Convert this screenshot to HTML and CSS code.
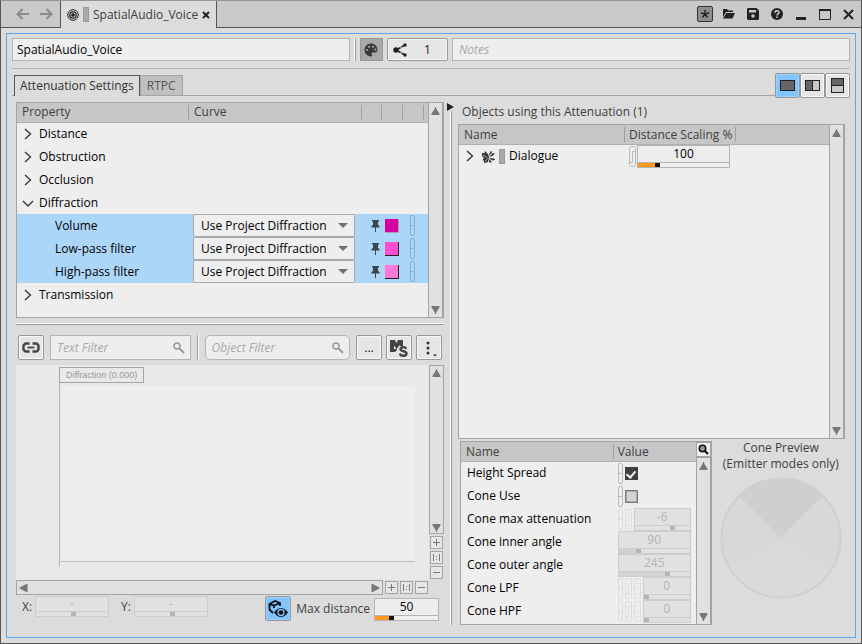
FILE: index.html
```html
<!DOCTYPE html>
<html lang="en">
<head>
<meta charset="utf-8">
<title>SpatialAudio_Voice</title>
<link rel="stylesheet" href="styles.css">
</head>
<body>
<svg class="defs" aria-hidden="true">
  <symbol id="up" viewBox="0 0 7 7"><path d="M3 0h1v1l3 5v1H0V6l3-5z"/></symbol>
  <symbol id="down" viewBox="0 0 7 7"><path d="M0 0h7v1L4 6v1H3V6L0 1z"/></symbol>
  <symbol id="left" viewBox="0 0 7 7"><path d="M7 0v7H6L0 4V3l6-3z"/></symbol>
  <symbol id="right" viewBox="0 0 7 7"><path d="M0 0v7h1l6-3V3L1 0z"/></symbol>
  <symbol id="closed" viewBox="0 0 12 12"><path d="M3 1l5.500 5L3 11" fill="none" stroke="#333" stroke-width="1.300"/></symbol>
  <symbol id="open" viewBox="0 0 12 12"><path d="M1 4l5 5 5-5" fill="none" stroke="#333" stroke-width="1.300"/></symbol>
  <symbol id="pin" viewBox="0 0 9 12"><path d="M1 0h7v1.500H7V5l1.500 1v1.500H5V12H4V7.500H.5V6L2 5V1.500H1z"/></symbol>
  <symbol id="lens" viewBox="0 0 12 12"><circle cx="4" cy="4" r="3" fill="none" stroke="currentColor" stroke-width="1.500"/><path d="M6 6l5 5" stroke="currentColor" stroke-width="1.800"/></symbol>
  <symbol id="curve" viewBox="0 0 7 23"><rect x=".5" y="1.500" width="6" height="20" rx="2" fill="none" stroke="currentColor"/><path d="M1 17.500h2.500v-11H6" fill="none" stroke="currentColor"/></symbol>
  <symbol id="dash" viewBox="0 0 5 23"><rect x=".5" y="1.500" width="4" height="20" rx="1.500" fill="none" stroke="currentColor"/><path d="M1 11.500h3" stroke="currentColor"/></symbol>
  <symbol id="dots" viewBox="0 0 7 23"><rect x=".5" y="1.500" width="6" height="20" rx="2" fill="none" stroke="currentColor"/><path d="M2 6.500h3M2 11.500h3M2 16.500h3" stroke="currentColor"/></symbol>
</svg>

<header class="titlebar">
  <nav class="history">
    <button class="plain" aria-label="Back"><svg width="13" height="12" viewBox="0 0 13 12"><path d="M13 6H1.500M6.500 1l-5 5 5 5" fill="none" stroke="#8b8b8b" stroke-width="2"/></svg></button>
    <button class="plain" aria-label="Forward"><svg width="13" height="12" viewBox="0 0 13 12"><path d="M0 6h11.500M6.500 1l5 5-5 5" fill="none" stroke="#8b8b8b" stroke-width="2"/></svg></button>
  </nav>
  <div class="doctab">
    <svg width="12" height="12" viewBox="0 0 12 12" fill="none" stroke="#222"><circle cx="6" cy="6" r="5.300"/><circle cx="6" cy="6" r="3.200" stroke-width="1.300"/><circle cx="6" cy="6" r="1.300" fill="#222"/></svg>
    <span class="chip"></span>
    <span>SpatialAudio_Voice</span>
    <button class="plain" aria-label="Close tab"><svg width="8" height="8" viewBox="0 0 8 8"><path d="M1 1l6 6M7 1L1 7" stroke="#222" stroke-width="2"/></svg></button>
  </div>
  <div class="winbtns">
    <button class="plain star" aria-label="Pin"><svg width="8" height="8" viewBox="0 0 8 8"><path d="M4 0v4M0 3l4 1 4-1M1.500 7.500L4 4l2.500 3.500" fill="none" stroke="#222" stroke-width="1.400"/></svg></button>
    <button class="plain" aria-label="Open"><svg width="12" height="10" viewBox="0 0 12 10" fill="#222"><path d="M0 0h4l1 1.500h5V3H3L0 8z"/><path d="M3.500 4H12L9.500 9.500H0z"/></svg></button>
    <button class="plain" aria-label="Save"><svg width="12" height="12" viewBox="0 0 12 12"><path d="M1 0h8.500L12 2.500V11l-1 1H1l-1-1V1z" fill="#222"/><path d="M2 2h7v2.500H2z" fill="#ccc"/><circle cx="6" cy="8" r="1.800" fill="#ccc"/></svg></button>
    <button class="plain" aria-label="Help"><svg width="12" height="12" viewBox="0 0 12 12"><circle cx="6" cy="6" r="6" fill="#222"/><path d="M4 4.700C4 2 8 2.200 8 4.500 8 6 6 5.900 6 7.500M6 8.500v1.500" fill="none" stroke="#ccc" stroke-width="1.500"/></svg></button>
    <button class="plain" aria-label="Minimize"><svg width="12" height="12" viewBox="0 0 12 12"><path d="M1 9h10v3H1z" fill="#222"/></svg></button>
    <button class="plain" aria-label="Maximize"><svg width="12" height="11" viewBox="0 0 12 11"><path d="M.5 1h11v9.500H.5z" fill="none" stroke="#222"/><path d="M0 0h12v2H0z" fill="#222"/></svg></button>
    <button class="plain" aria-label="Close"><svg width="11" height="11" viewBox="0 0 11 11"><path d="M1 1l9 9M10 1l-9 9" stroke="#222" stroke-width="2"/></svg></button>
  </div>
</header>

<main class="editor">
  <div class="identity">
    <input class="field name" type="text" aria-label="Name" value="SpatialAudio_Voice">
    <span class="vsep"></span>
    <button class="palette" aria-label="Color"><svg width="14" height="14" viewBox="0 0 14 14"><path d="M7 .5C3 .5.500 3.500.5 7S3.500 13.500 7 13.500c1.500 0 1-1.500.7-2.300-.2-1 .3-1.700 1.300-1.700h2C12.500 9.500 13.500 8.500 13.500 7 13.500 3 10.500.500 7 .5z" fill="#3a3a3a"/><g fill="#a9a9a9"><circle cx="3" cy="7" r="1.100"/><circle cx="5" cy="3.800" r="1.100"/><circle cx="9" cy="3.800" r="1.100"/><circle cx="11.300" cy="6.500" r="1.100"/></g></svg></button>
    <button class="btn share" aria-label="References"><svg width="14" height="14" viewBox="0 0 14 14"><g fill="#222"><circle cx="3" cy="7" r="2.700"/><circle cx="12" cy="2" r="1.700"/><circle cx="12" cy="12" r="1.700"/></g><path d="M5 6l6-3.500M5 8l6 3.500" stroke="#222" stroke-width="1.500" stroke-dasharray="3 1"/></svg><span>1</span></button>
    <input class="field notes" type="text" aria-label="Notes" placeholder="Notes">
  </div>
  <hr class="rule">
  <div class="tabbar">
    <div class="tabs" role="tablist">
      <button class="tab active" role="tab">Attenuation Settings</button>
      <button class="tab" role="tab">RTPC</button>
    </div>
    <div class="views">
      <button class="btn on" aria-label="Single view"><svg width="15" height="11"><rect x=".5" y=".5" width="14" height="10" fill="#666" stroke="#222"/></svg></button>
      <button class="btn" aria-label="Side by side"><svg width="15" height="11"><rect x=".5" y=".5" width="14" height="10" fill="#c9c9c9" stroke="#222"/><rect x=".5" y=".5" width="7" height="10" fill="#666" stroke="#222"/></svg></button>
      <button class="btn" aria-label="Stacked"><svg width="13" height="15"><rect x=".5" y=".5" width="12" height="14" fill="#c9c9c9" stroke="#222"/><rect x=".5" y=".5" width="12" height="7" fill="#666" stroke="#222"/></svg></button>
    </div>
  </div>

  <div class="workspace">
    <section class="left">
      <div class="box properties">
        <div class="body">
          <table>
            <colgroup><col class="c-prop"><col><col class="c-pin"><col class="c-s"><col class="c-s"><col class="c-end"></colgroup>
            <thead><tr><th>Property</th><th>Curve</th><th></th><th></th><th></th><th class="last"></th></tr></thead>
            <tbody>
              <tr><td colspan="6"><span class="node"><svg class="tw"><use href="#closed"/></svg>Distance</span></td></tr>
              <tr><td colspan="6"><span class="node"><svg class="tw"><use href="#closed"/></svg>Obstruction</span></td></tr>
              <tr><td colspan="6"><span class="node"><svg class="tw"><use href="#closed"/></svg>Occlusion</span></td></tr>
              <tr><td colspan="6"><span class="node"><svg class="tw"><use href="#open"/></svg>Diffraction</span></td></tr>
              <tr class="sel"><td class="child"><label for="s1">Volume</label></td><td class="pick"><span class="combo"><select id="s1"><option>Use Project Diffraction</option></select></span></td><td class="pincell"><svg class="pin"><use href="#pin"/></svg></td><td class="mid"><button class="swatch s1" aria-label="Volume color"></button></td><td class="mid"><svg class="dash"><use href="#dash"/></svg></td><td></td></tr>
              <tr class="sel"><td class="child"><label for="s2">Low-pass filter</label></td><td class="pick"><span class="combo"><select id="s2"><option>Use Project Diffraction</option></select></span></td><td class="pincell"><svg class="pin"><use href="#pin"/></svg></td><td class="mid"><button class="swatch s2" aria-label="Low-pass color"></button></td><td class="mid"><svg class="dash"><use href="#dash"/></svg></td><td></td></tr>
              <tr class="sel"><td class="child"><label for="s3">High-pass filter</label></td><td class="pick"><span class="combo"><select id="s3"><option>Use Project Diffraction</option></select></span></td><td class="pincell"><svg class="pin"><use href="#pin"/></svg></td><td class="mid"><button class="swatch s3" aria-label="High-pass color"></button></td><td class="mid"><svg class="dash"><use href="#dash"/></svg></td><td></td></tr>
              <tr><td colspan="6"><span class="node"><svg class="tw"><use href="#closed"/></svg>Transmission</span></td></tr>
            </tbody>
          </table>
        </div>
        <div class="vbar"><svg><use href="#up"/></svg><svg><use href="#down"/></svg></div>
      </div>
      <div class="hsplit"></div>
      <div class="filters">
        <button class="btn sq" aria-label="Link selection"><svg width="18" height="11" viewBox="0 0 18 11" fill="none" stroke="#444" stroke-width="2.400"><path d="M7.500 1.500H5A3 3 0 0 0 1.500 5v1A3 3 0 0 0 5 9.500h2.500M10.500 1.500H13A3 3 0 0 1 16.500 5v1A3 3 0 0 1 13 9.500h-2.500"/><path d="M5.500 5.500h7" stroke-width="1.800"/></svg></button>
        <label class="search text"><input type="text" aria-label="Text Filter" placeholder="Text Filter"><svg><use href="#lens"/></svg></label>
        <span class="vsep"></span>
        <label class="search object"><input type="text" aria-label="Object Filter" placeholder="Object Filter"><svg><use href="#lens"/></svg></label>
        <span class="group">
          <button class="btn sq more">...</button>
          <button class="btn sq" aria-label="Mute and Solo"><svg width="18" height="18" viewBox="0 0 18 18"><path d="M0 1h5l1.500 3L8 1h5v6h-3V6L6.500 10 4 6.500V10h3v1l-2 2H0z" fill="#444"/><path d="M16 10c-.5-2.500-5.500-2.500-5.500.3 0 2.400 6 1.500 6 4.200 0 3-6 3-6.500 0" fill="none" stroke="#444" stroke-width="2.400"/></svg></button>
          <button class="btn sq" aria-label="Options"><svg width="16" height="18" viewBox="0 0 16 18" fill="#333"><circle cx="7" cy="4" r="1.500"/><circle cx="7" cy="9" r="1.500"/><circle cx="7" cy="14" r="1.500"/><path d="M12 15.500h4l-2 2z"/></svg></button>
        </span>
      </div>
      <div class="graph">
        <div class="canvas">
          <span class="caption">Diffraction (0.000)</span>
          <div class="plot"><div class="area"></div></div>
        </div>
        <div class="vtools">
          <div class="vbar lone"><svg><use href="#up"/></svg><svg><use href="#down"/></svg></div>
          <button class="zoom" aria-label="Zoom in vertically"><svg width="9" height="9"><path d="M1 4.500h7M4.500 1v7"/></svg></button>
          <button class="zoom" aria-label="Reset vertical zoom"><svg width="9" height="9"><path d="M1.500 1v7M7.500 1v7M4.500 3v1M4.500 6v1"/></svg></button>
          <button class="zoom" aria-label="Zoom out vertically"><svg width="9" height="9"><path d="M1 4.500h7"/></svg></button>
        </div>
        <div class="htools">
          <div class="hbar"><svg><use href="#left"/></svg><svg><use href="#right"/></svg></div>
          <button class="zoom" aria-label="Zoom in horizontally"><svg width="9" height="9"><path d="M1 4.500h7M4.500 1v7"/></svg></button>
          <button class="zoom" aria-label="Reset horizontal zoom"><svg width="9" height="9"><path d="M1.500 1v7M7.500 1v7M4.500 3v1M4.500 6v1"/></svg></button>
          <button class="zoom" aria-label="Zoom out horizontally"><svg width="9" height="9"><path d="M1 4.500h7"/></svg></button>
        </div>
      </div>
      <div class="coords">
        <label for="px">X:</label><span class="num off"><input id="px" type="text" value="-" disabled><i class="track"><i class="thumb" style="margin-left:48%"></i></i></span>
        <label for="py">Y:</label><span class="num off"><input id="py" type="text" value="-" disabled><i class="track"><i class="thumb" style="margin-left:48%"></i></i></span>
        <span class="group distance">
          <button class="btn sq on" aria-label="Show in 3D"><svg width="20" height="18" viewBox="0 0 20 18"><path d="M1.500 9V4L7 1l5 2v3M1.500 4L6 5.500 12 3M6 5.500V8M1 9l4 4" fill="none" stroke="#111" stroke-width="1.800"/><path d="M6 12.500q7-9 14 0-7 9-14 0z" fill="#111"/><circle cx="13" cy="12.500" r="3" fill="none" stroke="#82c4ff" stroke-width="1.300"/></svg></button>
          <label for="md">Max distance</label>
          <span class="num"><input id="md" type="text" value="50"><i class="track"><i class="fill" style="width:23%"></i><i class="thumb"></i></i></span>
        </span>
      </div>
    </section>

    <div class="vsplit"><svg width="7" height="8" viewBox="0 0 7 8"><path d="M0 0l7 4-7 4z" fill="#222"/></svg><span></span></div>

    <section class="right">
      <h2>Objects using this Attenuation (1)</h2>
      <div class="box objects">
        <div class="body">
          <table>
            <colgroup><col class="c-obj"><col class="c-scale"><col></colgroup>
            <thead><tr><th>Name</th><th>Distance Scaling %</th><th class="last"></th></tr></thead>
            <tbody><tr>
              <td><span class="node"><svg class="tw"><use href="#closed"/></svg><svg width="13" height="13" viewBox="0 0 13 13" fill="#3a3a3a"><path d="M0 3l2.500 0L3 1l3 3 1 3-1 5-4 1v-2l-1.500-1L2 8 0 6z"/><path d="M6.500 6L8.500 1.500 10 1 9.500 3.500zM7 7l4-4 2 .5-2.500 2.500zM7 8l5.500.5L13 10l-3 .5zM6.500 8.500L10 12l-2.500 1z"/><path d="M1 5l4 2.500M3 11l3-2.500" stroke="#ccc" stroke-width=".7" fill="none"/></svg><span class="chip"></span><label for="ds">Dialogue</label></span></td>
              <td colspan="2"><span class="value"><svg class="curve"><use href="#curve"/></svg><span class="num scale"><input id="ds" type="text" value="100"><i class="track"><i class="fill" style="width:19%"></i><i class="thumb"></i></i></span></span></td>
            </tr></tbody>
          </table>
        </div>
        <div class="vbar"><svg><use href="#up"/></svg><svg><use href="#down"/></svg></div>
      </div>
      <div class="bottom">
        <div class="box cone">
          <div class="body">
            <table>
              <colgroup><col><col class="c-val"></colgroup>
              <thead><tr><th>Name</th><th class="last">Value</th></tr></thead>
              <tbody>
                <tr><td><label for="k1">Height Spread</label></td><td><span class="value"><svg class="dash"><use href="#dash"/></svg><input id="k1" type="checkbox" checked></span></td></tr>
                <tr><td><label for="k2">Cone Use</label></td><td><span class="value"><svg class="dash"><use href="#dash"/></svg><input id="k2" type="checkbox"></span></td></tr>
                <tr><td><label for="k3">Cone max attenuation</label></td><td><span class="value dim"><svg class="dash"><use href="#dash"/></svg><svg class="curve"><use href="#curve"/></svg><span class="num off"><input id="k3" type="text" value="-6" disabled><i class="track"><i class="thumb" style="margin-left:64%"></i></i></span></span></td></tr>
                <tr><td><label for="k4">Cone inner angle</label></td><td><span class="value dim"><span class="num off"><input id="k4" type="text" value="90" disabled><i class="track"><i class="fill" style="width:24%"></i><i class="thumb"></i></i></span></span></td></tr>
                <tr><td><label for="k5">Cone outer angle</label></td><td><span class="value dim"><span class="num off"><input id="k5" type="text" value="245" disabled><i class="track"><i class="fill" style="width:65%"></i><i class="thumb"></i></i></span></span></td></tr>
                <tr><td><label for="k6">Cone LPF</label></td><td><span class="value dim"><svg class="dash"><use href="#dash"/></svg><svg class="curve"><use href="#curve"/></svg><svg class="curve"><use href="#dots"/></svg><span class="num off"><input id="k6" type="text" value="0" disabled><i class="track"><i class="thumb"></i></i></span></span></td></tr>
                <tr><td><label for="k7">Cone HPF</label></td><td><span class="value dim"><svg class="dash"><use href="#dash"/></svg><svg class="curve"><use href="#curve"/></svg><svg class="curve"><use href="#dots"/></svg><span class="num off"><input id="k7" type="text" value="0" disabled><i class="track"><i class="thumb"></i></i></span></span></td></tr>
              </tbody>
            </table>
          </div>
          <div class="side">
            <button class="find" aria-label="Search"><svg width="11" height="11" viewBox="0 0 11 11"><circle cx="4.500" cy="4.500" r="3.200" fill="#999" stroke="#111" stroke-width="1.600"/><path d="M7 7l3 3" stroke="#111" stroke-width="2.200"/></svg></button>
            <div class="vbar"><svg><use href="#up"/></svg><svg><use href="#down"/></svg></div>
          </div>
        </div>
        <figure class="preview">
          <figcaption>Cone Preview<br>(Emitter modes only)</figcaption>
          <svg width="122" height="122" viewBox="-61 -61 122 122"><circle r="59.500" fill="#dadada"/><path d="M0 0L-50.500 31.500A59.500 59.500 0 0 1-42-42z" fill="#d8d8d8"/><path d="M0 0L50.500 31.500A59.500 59.500 0 0 0 42-42z" fill="#d8d8d8"/><path d="M0 0L-42-42A59.500 59.500 0 0 1 42-42z" fill="#cfcfcf"/><circle r="59.500" fill="none" stroke="#cfcfcf" stroke-width="2"/></svg>
        </figure>
      </div>
    </section>
  </div>
</main>
</body>
</html>
```
FILE: styles.css
```css
* { box-sizing: border-box; }
html { height: 100%; }
body {
  margin: 0;
  min-height: 100vh;
  display: flex;
  flex-direction: column;
  background: #dcdcdc;
  border: 1px solid #555;
  border-top-color: #969696;
  color: #404040;
  font: 12px/16px "Open Sans", "Noto Sans", sans-serif;
}
.defs { position: absolute; width: 0; height: 0; }
svg { display: block; flex: none; }
button, input, select { font: inherit; color: inherit; margin: 0; padding: 0; border-radius: 0; }
button { display: flex; align-items: center; justify-content: center; flex: none; }
input { min-width: 0; }

/* title bar */
.titlebar { display: flex; height: 27px; background: #c9c9c9; }
.plain { border: 0; background: none; }
.history { width: 60px; display: flex; align-items: center; gap: 11px; padding-left: 15px; border-right: 1px solid #555; border-bottom: 1px solid #555; }
.doctab { display: flex; align-items: center; gap: 4px; padding: 0 6px; background: #dcdcdc; border-right: 1px solid #555; }
.chip { width: 6px; height: 15px; background: #a9a9a9; border: 1px solid #999; flex: none; }
.winbtns { flex: 1; display: flex; justify-content: flex-end; align-items: center; gap: 12px; padding-right: 7px; border-bottom: 1px solid #555; }
.star { width: 16px; height: 16px; background: #8e8e8e; border: 1px solid #333; border-radius: 2px; margin-right: -2px; }

/* editor frame */
.editor { flex: 1; display: flex; flex-direction: column; margin: 5px; padding: 4px 5px 12px; border: 1px solid #5aa9ec; }
.identity { display: flex; height: 23px; gap: 4px; }
.field { height: 23px; padding: 0 4px; border: 1px solid #b4b4b4; background: #eee; color: #000; }
.name { flex: 338 1 0; }
.notes { flex: 398 1 0; padding-left: 6px; }
::placeholder { color: #a9a9a9; font-style: italic; opacity: 1; }
.vsep { width: 2px; border-left: 1px solid #999; border-right: 1px solid #fff; flex: none; }
.identity .vsep { border-left-color: #fff; border-right-color: #999; }
.palette { width: 23px; border: 1px solid #979797; background: #a9a9a9; }
.btn { border: 1px solid #979797; border-radius: 2px; background: #e6e6e6; box-shadow: inset 0 0 0 1px #f8f8f8; }
.btn.on { background: #82c4ff; box-shadow: inset 0 0 0 1px #9bd0ff; }
.share { width: 61px; padding: 0 16px 0 5px; justify-content: space-between; color: #222; }
.rule { width: 100%; height: 1px; margin: 7px 0 4px; border: 0; background: #b4b4b4; }
.tabbar { display: flex; align-items: flex-start; }
.tabs { flex: 1; height: 23px; display: flex; align-items: flex-end; padding-left: 2px; border-bottom: 1px solid #a4a4a4; }
.tab { height: 20px; padding: 0 6px; border: 1px solid #a4a4a4; border-bottom: 0; background: #c0c0c0; color: #555; }
.tab.active { height: 21px; margin-bottom: -1px; padding: 0 5px; background: #dcdcdc; border-color: #555; color: #333; }
.views { display: flex; }
.views .btn { width: 25px; height: 25px; }

/* workspace */
.workspace { flex: 1; display: grid; grid-template-columns: minmax(0, 428fr) 14px minmax(0, 392fr); padding: 4px 0 0 4px; }
.left, .right { display: flex; flex-direction: column; min-width: 0; }
.box { display: flex; border: 1px solid #a4a4a4; background: #eee; }
.body { flex: 1; min-width: 0; }
table { width: 100%; border-collapse: collapse; table-layout: fixed; color: #000; }
th { height: 19px; padding: 0 0 0 5px; text-align: left; font-weight: 400; color: #404040; background: #c6c6c6 linear-gradient(#a0a0a0, #a0a0a0) right 2px / 1px 15px no-repeat; border-bottom: 1px solid #b0b0b0; line-height: 16px; white-space: nowrap; }
th.last { background-image: none; }
td { height: 23px; padding: 0; line-height: 16px; white-space: nowrap; }
.vbar { width: 15px; display: flex; flex-direction: column; justify-content: space-between; align-items: center; padding: 4px 0 3px; background: #e1e1e1; border-left: 1px solid #a4a4a4; border-right: 1px solid #a4a4a4; flex: none; }
.vbar svg, .hbar svg { width: 9px; height: 8px; fill: #777; }
.node { display: flex; align-items: center; gap: 5px; padding-left: 5px; }
.tw { width: 12px; height: 12px; }

.properties { height: 216px; }
.c-prop { width: 172px; }
.c-pin { width: 20px; }
.c-s { width: 21px; }
.c-end { width: 4px; }
.sel { background: #acd6f8; }
.child { padding-left: 38px; }
.pick { padding: 0 7px 0 4px; }
.combo { position: relative; display: block; }
.combo select { display: block; appearance: none; width: 100%; height: 23px; padding: 0 7px; border: 1px solid #a9a9a9; border-radius: 1px; background: #eee; color: #000; }
.combo::after { content: ""; position: absolute; right: 7px; top: 9px; border: 5px solid transparent; border-top-color: #707070; border-bottom: 0; pointer-events: none; }
.mid { padding-right: 2px; }
.mid svg, .mid button { margin: 0 auto; }
.pincell { padding-left: 9px; }
.pin { width: 9px; height: 12px; fill: #3a4650; }
.dash { width: 5px; height: 23px; color: #b8b8b8; }
.sel .dash { color: #88aecb; }
.swatch { width: 14px; height: 14px; border: 0; border-right: 1px solid #222; border-bottom: 1px solid #222; }
.s1 { background: #d900a0; border-color: #b09ab8; }
.s2 { background: #ff4fd0; }
.s3 { background: #ff78dc; }

.hsplit { height: 2px; margin: 5px 0 10px; border-top: 1px solid #fff; border-bottom: 1px solid #999; }
.filters { display: flex; align-items: stretch; height: 25px; gap: 6px; padding: 0 2px; }
.sq { width: 26px; height: 25px; }
.more { color: #111; }
.group { display: flex; gap: 4px; }
.search { display: flex; align-items: center; border: 1px solid #b4b4b4; background: #eee; color: #999; min-width: 0; padding-right: 5px; }
.search input { flex: 1; border: 0; background: none; padding: 0 6px; color: #000; }
.search svg { width: 12px; height: 12px; }
.search.text { flex: 140 1 0; }
.search.object { flex: 145 1 0; border-radius: 5px; }

.graph { flex: 1; display: grid; grid-template: minmax(0, 1fr) 15px / minmax(0, 1fr) 15px; margin-top: 5px; }
.canvas { display: flex; flex-direction: column; align-items: flex-start; padding: 2px 14px 14px 43px; background: #e9e9e9; }
.caption { height: 16px; padding: 0 6px; border: 1px solid #a4a4a4; font: 9px/14px "Liberation Sans", sans-serif; color: #999; }
.plot { flex: 1; align-self: stretch; padding: 3px 0 4px 1px; border-left: 1px solid #b4b4b4; }
.area { height: 100%; background: #eee; border-bottom: 1px solid #bdbdbd; }
.vtools { display: flex; flex-direction: column; align-items: center; gap: 2px; padding-bottom: 1px; }
.vbar.lone { flex: 1; padding: 3px 0 1px; border: 1px solid #a4a4a4; }
.htools { grid-column: 1 / 3; display: flex; align-items: center; gap: 2px; padding-right: 16px; }
.hbar { flex: 1; height: 15px; display: flex; align-items: center; justify-content: space-between; padding: 0 2px; border: 1px solid #a4a4a4; background: #e1e1e1; }
.zoom { width: 13px; height: 13px; border: 1px solid #a4a4a4; background: #e6e6e6; }
.zoom path { stroke: #777; fill: none; }

.num { display: flex; flex-direction: column; height: 23px; border: 1px solid #b4b4b4; background: #eee; color: #000; min-width: 0; }
.num input { flex: 1; width: 100%; min-height: 0; border: 0; background: none; text-align: center; line-height: 16px; }
.track { display: flex; flex: none; height: 5px; border-top: 1px solid #b4b4b4; }
.fill { background: #ff9a1e; }
.thumb { width: 5px; background: #111; }
.num.off { border-color: #cdcdcd; background: #e1e1e1; color: #b4b4b4; }
.off .track { border-color: #cdcdcd; }
.off .thumb { background: #b4b4b4; }
.off .fill { background: #d2d2d2; }
.coords { display: flex; align-items: flex-start; padding: 1px 5px 0 6px; margin-bottom: 4px; }
.coords > label { margin-top: 3px; width: 13px; flex: none; }
.coords > .num { width: 74px; height: 21px; margin-right: 12px; }
.distance { margin-left: auto; gap: 5px; }
.distance label { margin-top: 5px; }
.distance .num { width: 65px; margin: 2px 0 0 -1px; }

.vsplit { display: flex; flex-direction: column; align-items: center; padding: 1px 1px 0 0; }
.vsplit span { flex: 1; width: 2px; border-left: 1px solid #fff; border-right: 1px solid #999; }

h2 { margin: 2px 0 4px 4px; font: inherit; }
.objects { flex: 1; margin-right: 5px; }
.c-obj { width: 166px; }
.c-scale { width: 111px; }
.objects .node { gap: 6px; }
.objects .chip { margin: 0 -2px; }
.right th { padding: 1px 0 0 4px; }
.right th:first-child { padding-left: 5px; }
.value { display: flex; align-items: center; gap: 1px; height: 23px; padding: 0 5px 0 4px; }
.curve { width: 7px; height: 23px; color: #b8b8b8; }
.scale { width: 93px; }
.bottom { display: flex; height: 184px; margin: 2px 0 0 2px; }
.cone { flex: 251 1 0; }
.cone td:first-child { padding-left: 6px; }
.cone .num { flex: 1; }
.c-val { width: 82px; }
.value.dim > svg { color: #dcdcdc; margin-right: 1px; }
input[type="checkbox"] { appearance: none; width: 13px; height: 13px; margin-left: 1px; border: 1px solid #777; box-shadow: inset 0 0 0 1px #aaa; background: #d4d4d4; }
input[type="checkbox"]:checked { background: #404040; border-color: #404040; box-shadow: none; display: flex; justify-content: center; }
input[type="checkbox"]:checked::after { content: ""; width: 4px; height: 7px; margin-top: 1px; border: solid #eee; border-width: 0 2px 2px 0; transform: rotate(40deg); }
.side { display: flex; flex-direction: column; width: 15px; }
.side .vbar { flex: 1; border-top: 1px solid #a4a4a4; }
.find { height: 15px; border: 1px solid #a4a4a4; background: #eee; }
.preview { flex: 139 1 0; min-width: 0; display: flex; flex-direction: column; align-items: center; margin: -1px 0 0; text-align: center; }
.preview figcaption { margin-bottom: 5px; white-space: nowrap; }
```
